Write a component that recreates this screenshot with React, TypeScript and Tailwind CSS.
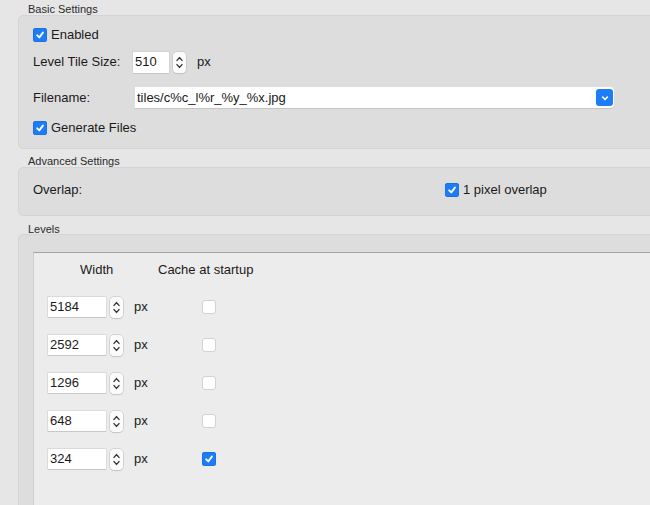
import React from "react";

const Check = ({ on }: { on?: boolean }) =>
  on ? (
    <span className="flex h-[14px] w-[14px] shrink-0 items-center justify-center rounded-[3px] bg-[#1d7df6] shadow-[inset_0_0_0_0.5px_#1466d6]">
      <svg viewBox="0 0 10 10" className="h-[10px] w-[10px]">
        <path d="M2.2 5.3 4.3 7.4 7.9 2.6" fill="none" stroke="white" strokeWidth="1.9" strokeLinecap="round" strokeLinejoin="round" />
      </svg>
    </span>
  ) : (
    <span className="h-[14px] w-[14px] shrink-0 rounded-[3px] border border-[#d2d2d2] bg-white" />
  );

const Stepper = ({ h = 21 }: { h?: number }) => (
  <span
    className="flex w-[13px] shrink-0 items-center justify-center rounded-[4px] bg-[#fbfbfb] shadow-[0_0_0_0.5px_#bcbcbc,0_1px_1px_rgba(0,0,0,0.12)]"
    style={{ height: h }}
  >
    <svg viewBox="0 0 13 21" className="h-full w-[13px]">
      <path d="M4 8.4 6.5 5.6 9 8.4" fill="none" stroke="#333" strokeWidth="1.4" strokeLinecap="round" strokeLinejoin="round" />
      <path d="M4 12.6 6.5 15.4 9 12.6" fill="none" stroke="#333" strokeWidth="1.4" strokeLinecap="round" strokeLinejoin="round" />
    </svg>
  </span>
);

const Field = ({ value, w, h }: { value: string; w: string; h: string }) => (
  <span className={`${w} ${h} flex shrink-0 items-center bg-white pl-[2px] text-[13px] text-[#1a1a1a] shadow-[0_0_0_0.5px_#c9c9c9,0_1px_0_#c4c4c4]`}>
    {value}
  </span>
);

const Label = ({ text, pt }: { text: string; pt: string }) => (
  <div className={`h-[18px] ${pt} pl-[10px] text-[11px] leading-[12px] text-[#2a2a2a]`}>{text}</div>
);

const levels = [
  { w: "5184", c: false },
  { w: "2592", c: false },
  { w: "1296", c: false },
  { w: "648", c: false },
  { w: "324", c: true },
];

export default function App() {
  return (
    <div className="h-[505px] w-[650px] overflow-hidden bg-[#e6e6e6] pl-[18px] font-['Liberation_Sans',Arial,sans-serif] text-[13px] text-[#1a1a1a]">
      <div className="h-[15px] pt-[3px] pl-[10px] text-[11px] leading-[12px] text-[#2a2a2a]">Basic Settings</div>
      <div className="w-[720px] rounded-[5px] border border-[#d4d4d4] bg-[#dddddd] pl-[14px] pt-[11px] pb-[12px]">
        <div className="flex h-[16px] items-center gap-[4px]">
          <Check on />
          <span>Enabled</span>
        </div>
        <div className="mt-[8px] flex h-[22px] items-center">
          <span className="w-[100px]">Level Tile Size:</span>
          <Field value="510" w="w-[36px]" h="h-[21px]" />
          <span className="ml-[4px]"><Stepper /></span>
          <span className="ml-[11px]">px</span>
        </div>
        <div className="mt-[14px] flex h-[21px] items-center">
          <span className="w-[102px]">Filename:</span>
          <span className="flex h-[21px] w-[479px] items-center justify-between rounded-r-[4px] bg-white pl-[2px] pr-[1px] shadow-[0_1px_0_#c4c4c4]">
            <span>tiles/c%c_l%r_%y_%x.jpg</span>
            <span className="flex h-[17px] w-[17px] items-center justify-center rounded-[3px] bg-[#1d7df6]">
              <svg viewBox="0 0 10 10" className="h-[10px] w-[10px]">
                <path d="M2.6 4 5 6.3 7.4 4" fill="none" stroke="white" strokeWidth="1.6" strokeLinecap="round" strokeLinejoin="round" />
              </svg>
            </span>
          </span>
        </div>
        <div className="mt-[12px] flex h-[16px] items-center gap-[4px]">
          <Check on />
          <span>Generate Files</span>
        </div>
      </div>

      <Label text="Advanced Settings" pt="pt-[6px]" />
      <div className="w-[720px] rounded-[5px] border border-[#d4d4d4] bg-[#dddddd] pl-[14px] pt-[14px] pb-[17px]">
        <div className="flex h-[16px] items-center">
          <span className="w-[412px]">Overlap:</span>
          <Check on />
          <span className="ml-[4px]">1 pixel overlap</span>
        </div>
      </div>

      <Label text="Levels" pt="pt-[7px]" />
      <div className="h-[300px] w-[720px] rounded-[5px] border border-[#d4d4d4] bg-[#dddddd] pl-[14px] pt-[17px]">
        <div className="h-[300px] border-t border-l border-t-[#a3a3a3] border-l-[#cdcdcd] bg-[#ececec] pt-[9px]">
          <div className="flex h-[16px] items-center pl-[46px]">
            <span className="w-[78px]">Width</span>
            <span>Cache at startup</span>
          </div>
          <div className="mt-[19px] flex flex-col gap-[18px] pl-[14px]">
            {levels.map((l) => (
              <div key={l.w} className="flex h-[20px] items-center">
                <Field value={l.w} w="w-[58px]" h="h-[20px]" />
                <span className="ml-[4px]"><Stepper /></span>
                <span className="ml-[11px] w-[68px]">px</span>
                <Check on={l.c} />
              </div>
            ))}
          </div>
        </div>
      </div>
    </div>
  );
}
